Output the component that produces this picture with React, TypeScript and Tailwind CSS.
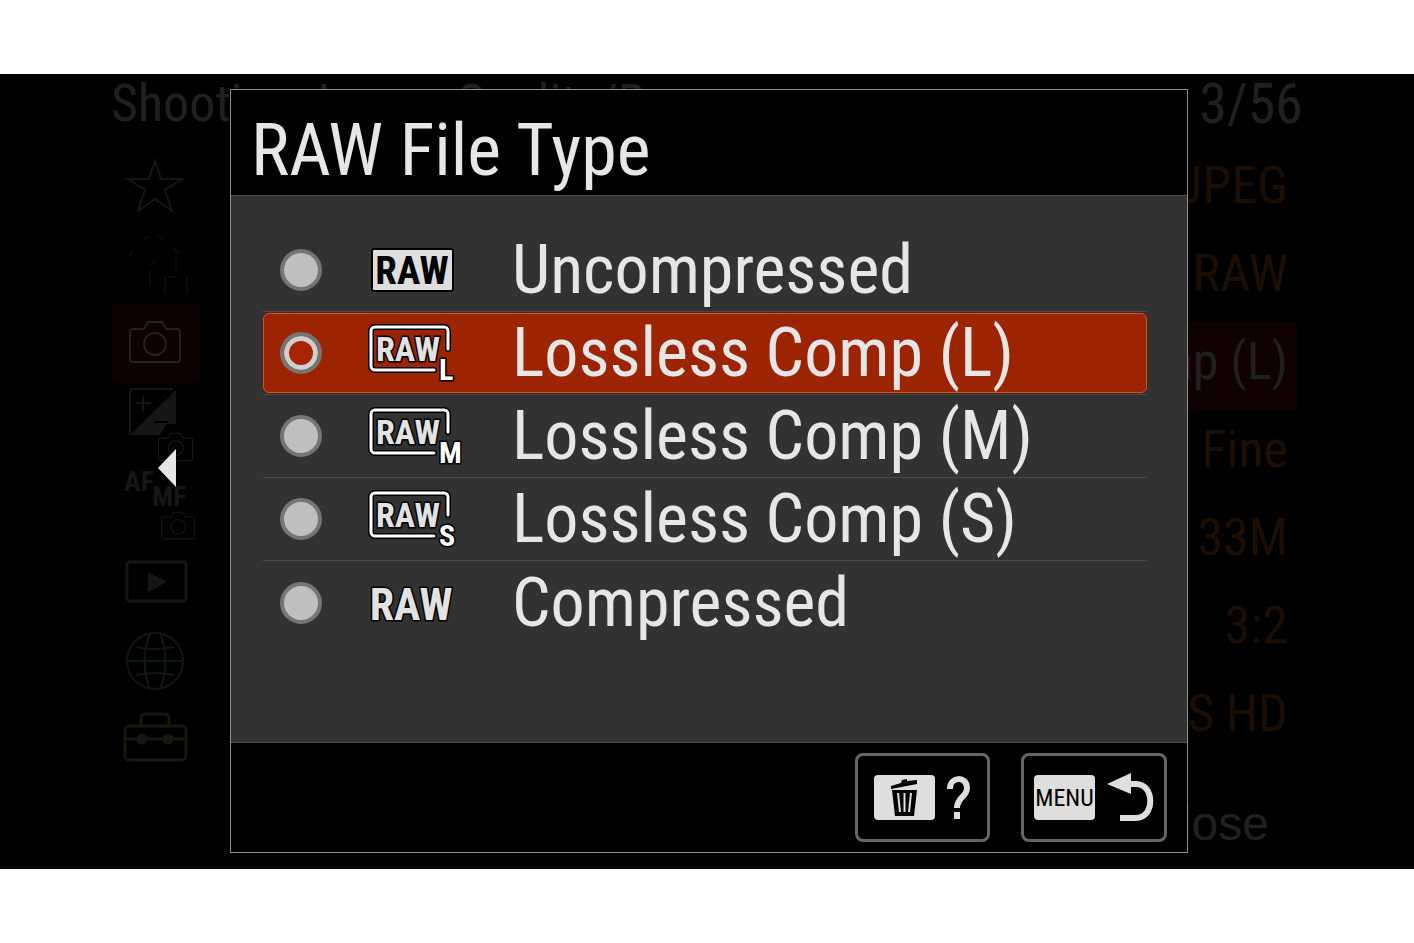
import { useState } from "react"

const narrow = "font-['Roboto_Condensed','Liberation_Sans',sans-serif]"

const fileTypes = [
    { id: "uncompressed", label: "Uncompressed", badge: "solid" },
    { id: "lossless-l", label: "Lossless Comp (L)", badge: "L" },
    { id: "lossless-m", label: "Lossless Comp (M)", badge: "M" },
    { id: "lossless-s", label: "Lossless Comp (S)", badge: "S" },
    { id: "compressed", label: "Compressed", badge: "plain" },
]

const settings = [
    { value: "JPEG", active: false },
    { value: "RAW", active: false },
    { value: "Comp (L)", active: true },
    { value: "Fine", active: false },
    { value: "L: 33M", active: false },
    { value: "3:2", active: false },
    { value: "S HD", active: false },
]

function CameraShape() {
    return (
        <>
            <path d="M4 9h11l4-7h14l4 7h11a3 3 0 0 1 3 3v27a3 3 0 0 1-3 3H4a3 3 0 0 1-3-3V12a3 3 0 0 1 3-3z" />
            <circle cx="26" cy="24" r="11" />
        </>
    )
}

const tabs = [
    {
        name: "My Menu",
        icon: (
            <svg viewBox="0 0 88 79" fill="none" stroke="#161616" strokeWidth="2" className="h-[79px] w-[88px]">
                <path d="M43 15l6 18h21L53 44l7 21-17-12-17 12 7-21-17-11h21z" />
            </svg>
        ),
    },
    {
        name: "Main",
        icon: (
            <svg viewBox="0 0 88 79" fill="none" stroke="#0c0c0c" strokeWidth="2" className="h-[79px] w-[88px]">
                <path d="M31 15l6-4m8-1l6 4M17 32l4-7m40-2l6 6M38 46v14m0-20l6-4m20-2v10M53 52v17m4-17h8m10-1v18" />
            </svg>
        ),
    },
    {
        name: "Shooting",
        icon: (
            <svg viewBox="0 0 88 79" fill="none" stroke="#262022" strokeWidth="2" className="h-[79px] w-[88px] rounded-sm bg-[#0d0101]">
                <g transform="translate(17 16)">
                    <CameraShape />
                </g>
            </svg>
        ),
    },
    {
        name: "Exposure/Color",
        icon: (
            <svg viewBox="0 0 88 79" fill="none" stroke="#161616" strokeWidth="2" className="h-[79px] w-[88px] overflow-visible">
                <path d="M18 51V9a3 3 0 0 1 3-3h40" />
                <path d="M64 7v34H54l-6 11H18z" fill="#161616" stroke="none" />
                <path d="M24 20h15M31 13v15" />
                <path d="M42 39h14" stroke="#000" />
                <g transform="translate(46 49) scale(.68)">
                    <CameraShape />
                </g>
            </svg>
        ),
    },
    {
        name: "Focus",
        icon: (
            <svg viewBox="0 0 88 79" fill="none" stroke="#131316" strokeWidth="2" className="h-[79px] w-[88px] overflow-visible">
                <g className={narrow} fill="#161616" stroke="none" fontSize="28" fontWeight="700">
                    <text x="12" y="29">AF</text>
                    <text x="40" y="44">MF</text>
                </g>
                <g transform="translate(49 49) scale(.66)">
                    <CameraShape />
                </g>
            </svg>
        ),
    },
    {
        name: "Playback",
        icon: (
            <svg viewBox="0 0 88 79" fill="none" stroke="#151717" strokeWidth="3" className="h-[79px] w-[88px]">
                <rect x="15" y="21" width="59" height="39" rx="3" />
                <path d="M36 31l19 10-19 10z" fill="#161616" stroke="none" />
            </svg>
        ),
    },
    {
        name: "Network",
        icon: (
            <svg viewBox="0 0 88 79" fill="none" stroke="#141616" strokeWidth="2" className="h-[79px] w-[88px]">
                <circle cx="43" cy="41" r="28" />
                <path d="M38 13q-11 28 0 56M48 13q11 28 0 56M24 27q19 4 38 0M24 55q19-4 38 0" />
                <path d="M15 41h56" stroke="#0a1c0a" />
            </svg>
        ),
    },
    {
        name: "Setup",
        icon: (
            <svg viewBox="0 0 88 79" fill="none" stroke="#17160f" strokeWidth="3" className="h-[79px] w-[88px]">
                <rect x="13" y="27" width="61" height="34" rx="4" />
                <path d="M29 26v-7a4 4 0 0 1 4-4h20a4 4 0 0 1 4 4v7M13 40h61" />
                <circle cx="30" cy="40" r="4" fill="#161616" />
                <circle cx="56" cy="40" r="4" fill="#161616" />
            </svg>
        ),
    },
]

function RawBadge({ kind }: { kind: string }) {
    if (kind === "solid") {
        return (
            <svg viewBox="0 0 96 64" className={`h-16 w-24 shrink-0 ${narrow}`} fontWeight="700" aria-hidden="true">
                <rect x="4" y="11" width="81" height="42" rx="2" fill="#dedede" stroke="#000" strokeWidth="2" />
                <text x="44" y="46" fontSize="39" textAnchor="middle" fill="#000">RAW</text>
            </svg>
        )
    }
    if (kind === "plain") {
        return (
            <svg viewBox="0 0 96 64" className={`h-16 w-24 shrink-0 ${narrow}`} fontWeight="700" aria-hidden="true">
                <text x="43" y="49" fontSize="44" textAnchor="middle" fill="#e2e2e2" stroke="#000" strokeWidth="3" paintOrder="stroke">RAW</text>
            </svg>
        )
    }
    return (
        <svg viewBox="0 0 96 64" className={`h-16 w-24 shrink-0 ${narrow}`} fontWeight="700" aria-hidden="true">
            <g fill="none" strokeLinecap="round">
                <path d="M66 49H7a4 4 0 0 1-4-4V10a4 4 0 0 1 4-4h69a4 4 0 0 1 4 4v18" stroke="#000" strokeWidth="6" />
                <path d="M66 49H7a4 4 0 0 1-4-4V10a4 4 0 0 1 4-4h69a4 4 0 0 1 4 4v18" stroke="#fff" strokeWidth="3" />
            </g>
            <g fill="#e2e2e2" stroke="#000" strokeWidth="3" paintOrder="stroke">
                <text x="40" y="40" fontSize="34" textAnchor="middle">RAW</text>
                <text x="71" y="59" fontSize="30" fill="#fff">{kind}</text>
            </g>
        </svg>
    )
}

export default function App() {
    const [selected, setSelected] = useState("lossless-l")

    return (
        <div className="min-h-screen bg-white py-[74px]">
            <main className={`relative bg-black ${narrow}`}>

                <header className="flex h-[72px] items-center justify-between px-[111px] pb-3 leading-none whitespace-pre text-[#202020]">
                    <span className="text-[52px]">Shooting  Image Quality/Rec</span>
                    <span className="text-[56px]">3/56</span>
                </header>

                <div className="flex items-start justify-between pr-[117px] pl-28">
                    <nav className="flex flex-col">
                        {tabs.map((tab) => (
                            <button key={tab.name} type="button" aria-label={tab.name}>{tab.icon}</button>
                        ))}
                    </nav>
                    <ul className="text-right text-[52px] leading-none">
                        {settings.map((item) => (
                            <li
                                key={item.value}
                                className={`flex h-[88px] items-center justify-end rounded-sm pr-[9px] pb-2 pl-5 ${item.active ? "bg-[#100102] text-[#202020]" : "text-[#1c0e03]"}`}
                            >
                                {item.value}
                            </li>
                        ))}
                    </ul>
                </div>

                <footer className="flex h-[91px] items-center justify-end pr-[145px] font-['Liberation_Sans',sans-serif] text-5xl text-[#202020]">
                    Close
                </footer>

                <button type="button" aria-label="Back" className="absolute top-[374px] left-[157px]">
                    <svg viewBox="0 0 20 40" className="h-10 w-5">
                        <path d="M1 20L19 1v38z" fill="#e6e6e6" />
                    </svg>
                </button>

                <section role="dialog" aria-labelledby="dialog-title" className="absolute top-[15px] right-[226px] left-[230px] border border-[#8c8c8c] bg-black text-[#e6e6e6]">
                    <h1 id="dialog-title" className="flex h-[105px] items-center pt-4 pl-5 text-7xl leading-none">RAW File Type</h1>

                    <ul className="h-[548px] border-y border-[#505050] bg-[#323232] pt-[33px] pr-10 pl-8">
                        {fileTypes.map((type) => (
                            <li key={type.id} className="flex h-[83px] items-center border-b border-[#484848] last:border-b-0">
                                <label
                                    htmlFor={type.id}
                                    className={`flex h-20 w-full items-center rounded-md border pl-4 ${selected === type.id ? "border-[#e0500f] bg-[#9c2400]" : "border-transparent"}`}
                                >
                                    <input
                                        id={type.id}
                                        type="radio"
                                        name="file-type"
                                        checked={selected === type.id}
                                        onChange={() => setSelected(type.id)}
                                        className="size-[42px] shrink-0 appearance-none rounded-full border-4 border-[#757575] bg-[#bfbfbf] checked:bg-[#a82400] checked:shadow-[inset_0_0_0_5px_#cfcfcf]"
                                    />
                                    <span className="ml-[46px]"><RawBadge kind={type.badge} /></span>
                                    <span className="ml-12 text-[68px] leading-none whitespace-nowrap">{type.label}</span>
                                </label>
                            </li>
                        ))}
                    </ul>

                    <div className="flex justify-end gap-[31px] pt-[10px] pr-5 pb-[10px]">
                        <button type="button" aria-label="Delete / Help" className="flex h-[89px] w-[135px] items-center justify-center gap-3 rounded-lg border-3 border-[#666]">
                            <svg viewBox="0 0 61 45" className="h-[45px] w-[61px]">
                                <rect width="61" height="45" rx="4" fill="#dedede" />
                                <path d="M17 11l10-3 1-3 5-1v2l10-1v4l-26 5z" />
                                <path d="M18 15h25l-3 26H21z" />
                                <path d="M24 18l2 19M30.500 18v19M37 18l-2 19" stroke="#dedede" strokeWidth="2" />
                            </svg>
                            <svg viewBox="0 0 24 45" fill="none" stroke="#dedede" strokeWidth="6" className="h-[45px] w-6">
                                <path d="M3 14C3 1 20 1 20 13c0 9-10 9-10 20" />
                                <path d="M10 37v7" />
                            </svg>
                        </button>
                        <button type="button" aria-label="Menu / Return" className="flex h-[89px] w-[146px] items-center justify-center gap-3 rounded-lg border-3 border-[#666]">
                            <span className="flex h-[45px] w-[61px] items-center justify-center rounded-sm bg-[#dedede] text-2xl leading-none text-black">MENU</span>
                            <svg viewBox="0 0 47 50" className="h-[50px] w-[47px]">
                                <path d="M0 11L24 0v21z" fill="#dedede" />
                                <path d="M22 11h7c19 0 19 34 0 34H13" fill="none" stroke="#dedede" strokeWidth="6" />
                            </svg>
                        </button>
                    </div>
                </section>
            </main>
        </div>
    )
}
